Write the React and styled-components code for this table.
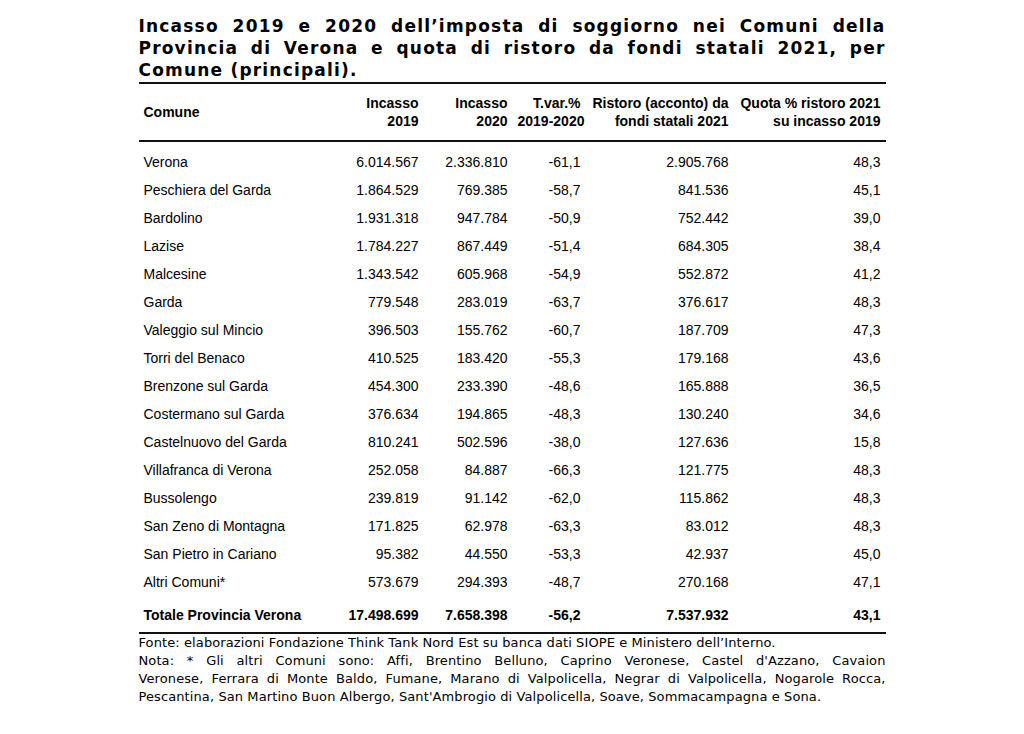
import React from "react";
import styled, { createGlobalStyle } from "styled-components";

const GlobalStyle = createGlobalStyle`
  html, body { margin: 0; padding: 0; background: #ffffff; }
  body { color: #000; }
`;

const Page = styled.div`
  width: 747px;
  margin: 0 auto;
  padding-top: 15px;
`;

const Title = styled.h1`
  margin: 0;
  font-family: "DejaVu Sans", Verdana, sans-serif;
  font-weight: bold;
  font-size: 17px;
  letter-spacing: 1.2px;
  line-height: 22px;
  color: #000;
  border-bottom: 2px solid #111;
  padding-bottom: 1px;
`;

const Line = styled.div`
  text-align: ${(p) => (p.$last ? "left" : "justify")};
  text-align-last: ${(p) => (p.$last ? "left" : "justify")};
  white-space: nowrap;
`;

const Table = styled.div`
  font-family: "Liberation Sans", Arial, sans-serif;
  font-size: 14px;
  color: #000;
`;

const cols = "195px 90px 89px 73px 148px 1fr";

const HeadRow = styled.div`
  display: grid;
  grid-template-columns: ${cols};
  padding: 10px 0 10px;
  border-bottom: 2px solid #111;
  font-weight: bold;
  line-height: 18px;
`;

const HeadCell = styled.div`
  padding: 0 5px;
  text-align: ${(p) => (p.$left ? "left" : "right")};
  align-self: center;
  white-space: nowrap;
`;

const Body = styled.div`
  padding-top: 6px;
`;

const Row = styled.div`
  display: grid;
  grid-template-columns: ${cols};
  height: 28px;
  align-items: center;
  font-weight: ${(p) => (p.$total ? "bold" : "normal")};
  ${(p) =>
    p.$total
      ? `margin-top: 5px; padding-bottom: 3px; border-bottom: 2px solid #111;`
      : ""}
`;

const Cell = styled.div`
  padding: 0 5px;
  text-align: ${(p) => (p.$left ? "left" : "right")};
  white-space: nowrap;
`;

const Footer = styled.div`
  font-family: "DejaVu Sans", Verdana, sans-serif;
  font-size: 13px;
  letter-spacing: 0.1px;
  line-height: 18px;
  color: #000;
`;

const rows = [
  ["Verona", "6.014.567", "2.336.810", "-61,1", "2.905.768", "48,3"],
  ["Peschiera del Garda", "1.864.529", "769.385", "-58,7", "841.536", "45,1"],
  ["Bardolino", "1.931.318", "947.784", "-50,9", "752.442", "39,0"],
  ["Lazise", "1.784.227", "867.449", "-51,4", "684.305", "38,4"],
  ["Malcesine", "1.343.542", "605.968", "-54,9", "552.872", "41,2"],
  ["Garda", "779.548", "283.019", "-63,7", "376.617", "48,3"],
  ["Valeggio sul Mincio", "396.503", "155.762", "-60,7", "187.709", "47,3"],
  ["Torri del Benaco", "410.525", "183.420", "-55,3", "179.168", "43,6"],
  ["Brenzone sul Garda", "454.300", "233.390", "-48,6", "165.888", "36,5"],
  ["Costermano sul Garda", "376.634", "194.865", "-48,3", "130.240", "34,6"],
  ["Castelnuovo del Garda", "810.241", "502.596", "-38,0", "127.636", "15,8"],
  ["Villafranca di Verona", "252.058", "84.887", "-66,3", "121.775", "48,3"],
  ["Bussolengo", "239.819", "91.142", "-62,0", "115.862", "48,3"],
  ["San Zeno di Montagna", "171.825", "62.978", "-63,3", "83.012", "48,3"],
  ["San Pietro in Cariano", "95.382", "44.550", "-53,3", "42.937", "45,0"],
  ["Altri Comuni*", "573.679", "294.393", "-48,7", "270.168", "47,1"],
];

const total = ["Totale Provincia Verona", "17.498.699", "7.658.398", "-56,2", "7.537.932", "43,1"];

const headers = [
  ["Incasso", "2019"],
  ["Incasso", "2020"],
  ["T.var.%", "2019-2020"],
  ["Ristoro (acconto) da", "fondi statali 2021"],
  ["Quota % ristoro 2021", "su incasso 2019"],
];

export default function App() {
  return (
    <>
      <GlobalStyle />
      <Page>
        <Title>
          <Line>Incasso 2019 e 2020 dell’imposta di soggiorno nei Comuni della</Line>
          <Line>Provincia di Verona e quota di ristoro da fondi statali 2021, per</Line>
          <Line $last>Comune (principali).</Line>
        </Title>
        <Table>
          <HeadRow>
            <HeadCell $left>Comune</HeadCell>
            {headers.map(([a, b]) => (
              <HeadCell key={a + b}>
                {a}
                <br />
                {b}
              </HeadCell>
            ))}
          </HeadRow>
          <Body>
            {rows.map((r) => (
              <Row key={r[0]}>
                {r.map((v, i) => (
                  <Cell key={i} $left={i === 0}>
                    {v}
                  </Cell>
                ))}
              </Row>
            ))}
            <Row $total>
              {total.map((v, i) => (
                <Cell key={i} $left={i === 0}>
                  {v}
                </Cell>
              ))}
            </Row>
          </Body>
        </Table>
        <Footer>
          <Line $last>
            Fonte: elaborazioni Fondazione Think Tank Nord Est su banca dati SIOPE e Ministero dell’Interno.
          </Line>
          <Line>
            Nota: * Gli altri Comuni sono: Affi, Brentino Belluno, Caprino Veronese, Castel d'Azzano, Cavaion
          </Line>
          <Line>
            Veronese, Ferrara di Monte Baldo, Fumane, Marano di Valpolicella, Negrar di Valpolicella, Nogarole Rocca,
          </Line>
          <Line $last>
            Pescantina, San Martino Buon Albergo, Sant'Ambrogio di Valpolicella, Soave, Sommacampagna e Sona.
          </Line>
        </Footer>
      </Page>
    </>
  );
}
